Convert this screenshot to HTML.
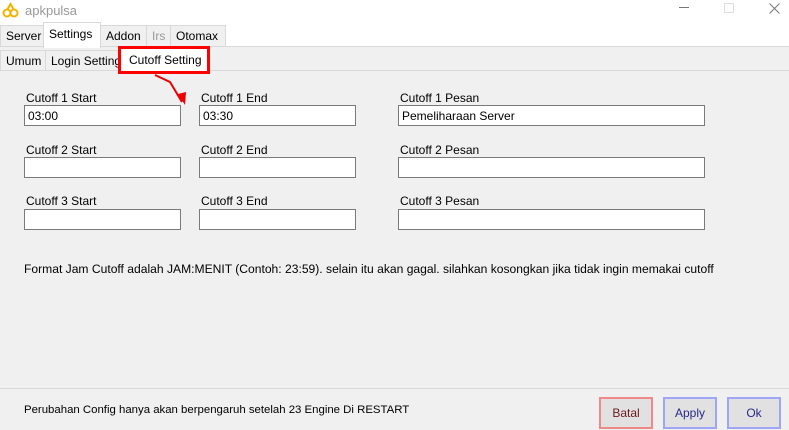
<!DOCTYPE html><html><head><style>
*{box-sizing:border-box;margin:0;padding:0}
body{width:789px;height:430px;background:#f0f0f0;font-family:"Liberation Sans",sans-serif;font-size:12px;color:#000;position:relative;overflow:hidden}
.a{position:absolute}
.tab{position:absolute;border:1px solid #d9d9d9;background:#f0f0f0;padding-left:5px;line-height:20px;white-space:nowrap}
.in{position:absolute;height:21px;background:#fff;border:1px solid #7a7a7a;padding:3px 3px;line-height:14px}
.lb{position:absolute;line-height:14px}
.btn{position:absolute;top:397px;width:54px;height:32px;background:#e1e1e1;border:2px solid;text-align:center;line-height:28px}
</style></head><body>
<div class="a" style="left:0;top:0;width:789px;height:47px;background:#fff"></div>
<svg class="a" style="left:2px;top:2px" width="18" height="16" viewBox="0 0 18 16"><circle cx="5" cy="11" r="3.5" fill="none" stroke="#f3b400" stroke-width="2"/><circle cx="12" cy="11" r="3.5" fill="none" stroke="#f3b400" stroke-width="2"/><path d="M5 8L8.5 2L12 8" fill="none" stroke="#f3b400" stroke-width="2"/></svg>
<div class="a" style="left:25px;top:3px;color:#999;font-size:13px">apkpulsa</div>
<div class="a" style="left:679px;top:7px;width:10px;height:1px;background:#777"></div>
<div class="a" style="left:724px;top:3px;width:10px;height:10px;border:1px solid #ddd"></div>
<svg class="a" style="left:769px;top:3px" width="11" height="11"><path d="M0.5 0.5L10.5 10.5M10.5 0.5L0.5 10.5" stroke="#777" stroke-width="1"/></svg>
<div class="a" style="left:0;top:46px;width:789px;height:1px;background:#d9d9d9"></div>
<div class="tab" style="left:0;top:25px;width:44px;height:22px">Server</div>
<div class="tab" style="left:100px;top:25px;width:47px;height:22px">Addon</div>
<div class="tab" style="left:146px;top:25px;width:25px;height:22px;color:#999">Irs</div>
<div class="tab" style="left:170px;top:25px;width:56px;height:22px">Otomax</div>
<div class="tab" style="left:43px;top:22px;width:58px;height:26px;background:#fff;border-bottom:none;line-height:22px">Settings</div>
<div class="a" style="left:0;top:70px;width:789px;height:1px;background:#d9d9d9"></div>
<div class="tab" style="left:0;top:50px;width:46px;height:21px">Umum</div>
<div class="tab" style="left:45px;top:50px;width:76px;height:21px">Login Setting</div>
<div class="tab" style="left:120px;top:48px;width:89px;height:24px;background:#fff;border-bottom:none;line-height:22px;padding-left:8px">Cutoff Setting</div>
<div class="a" style="left:118px;top:46px;width:92px;height:28px;border:3px solid #f00"></div>
<svg class="a" style="left:150px;top:72px" width="45" height="35"><path d="M5 3L20 10L32 30" fill="none" stroke="#e00" stroke-width="2"/><path d="M28 22L35 33L36 20Z" fill="#e00"/></svg>
<div class="lb" style="left:26px;top:91px">Cutoff 1 Start</div>
<div class="lb" style="left:201px;top:91px">Cutoff 1 End</div>
<div class="lb" style="left:400px;top:91px">Cutoff 1 Pesan</div>
<div class="in" style="left:24px;top:105px;width:157px">03:00</div>
<div class="in" style="left:199px;top:105px;width:157px">03:30</div>
<div class="in" style="left:398px;top:105px;width:307px">Pemeliharaan Server</div>
<div class="lb" style="left:26px;top:143px">Cutoff 2 Start</div>
<div class="lb" style="left:201px;top:143px">Cutoff 2 End</div>
<div class="lb" style="left:400px;top:143px">Cutoff 2 Pesan</div>
<div class="in" style="left:24px;top:157px;width:157px"></div>
<div class="in" style="left:199px;top:157px;width:157px"></div>
<div class="in" style="left:398px;top:157px;width:307px"></div>
<div class="lb" style="left:26px;top:194px">Cutoff 3 Start</div>
<div class="lb" style="left:201px;top:194px">Cutoff 3 End</div>
<div class="lb" style="left:400px;top:194px">Cutoff 3 Pesan</div>
<div class="in" style="left:24px;top:209px;width:157px"></div>
<div class="in" style="left:199px;top:209px;width:157px"></div>
<div class="in" style="left:398px;top:209px;width:307px"></div>
<div class="lb" style="left:24px;top:262px;font-size:12.1px;white-space:nowrap">Format Jam Cutoff adalah JAM:MENIT (Contoh: 23:59). selain itu akan gagal. silahkan kosongkan jika tidak ingin memakai cutoff</div>
<div class="a" style="left:0;top:388px;width:789px;height:1px;background:#d9d9d9"></div>
<div class="lb" style="left:24px;top:403px;font-size:11.4px;white-space:nowrap">Perubahan Config hanya akan berpengaruh setelah 23 Engine Di RESTART</div>
<div class="btn" style="left:599px;border-color:#f08a8a;color:#6b1a1a">Batal</div>
<div class="btn" style="left:663px;border-color:#9ea6f5;color:#2a2a8a">Apply</div>
<div class="btn" style="left:727px;border-color:#9ea6f5;color:#2a2a8a">Ok</div>
</body></html>
